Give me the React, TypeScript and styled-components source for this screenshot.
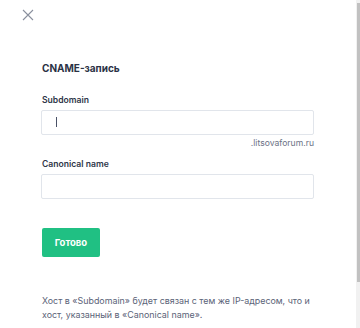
import React from "react";
import styled, { createGlobalStyle } from "styled-components";

const Global = createGlobalStyle`
  html, body { margin: 0; padding: 0; background: #ffffff; }
  body { font-family: "Inter", "Noto Sans", sans-serif; }
  * { box-sizing: border-box; }
`;

const Viewport = styled.div`
  width: 360px;
  height: 328px;
  overflow: hidden;
  display: flex;
  background: #ffffff;
`;

const Panel = styled.div`
  flex: 1;
  display: flex;
  flex-direction: column;
  padding: 9px 0 0 0;
`;

const ScrollTrack = styled.div`
  width: 4px;
  height: 100%;
  background: #f1f1f1;
  display: flex;
  flex-direction: column;
`;

const ScrollThumb = styled.div<{ $top: number; $size: number }>`
  margin: ${(p) => p.$top}px 0 0 1px;
  width: 2.5px;
  height: ${(p) => p.$size}px;
  background: #c1c1c1;
`;

const Header = styled.div`
  display: flex;
  padding-left: 22px;
  height: 21px;
`;

const CloseButton = styled.button`
  width: 12px;
  height: 12px;
  padding: 0;
  border: 0;
  background: transparent;
  display: flex;
  align-items: center;
  justify-content: center;
  cursor: pointer;
  color: #8a909e;
`;

const Body = styled.div`
  display: flex;
  flex-direction: column;
  padding-left: 41px;
  width: 314px;
`;

const Title = styled.h2`
  margin: 32px 0 0 1px;
  font-size: 10px;
  line-height: 12px;
  font-weight: 700;
  color: #2b3245;
`;

const Label = styled.label<{ $top: number }>`
  display: block;
  margin: ${(p) => p.$top}px 0 4px 1px;
  font-size: 8.6px;
  line-height: 12px;
  font-weight: 600;
  color: #2e3548;
`;

const Field = styled.div`
  position: relative;
  width: 273px;
  height: 25px;
`;

const Input = styled.input`
  width: 100%;
  height: 100%;
  border: 1px solid #e1e5eb;
  border-radius: 2px;
  background: #ffffff;
  outline: none;
  padding: 0 14px;
  font-family: inherit;
  font-size: 10px;
  color: #2b3245;
`;

const Caret = styled.span`
  position: absolute;
  left: 15px;
  top: 7px;
  width: 1px;
  height: 10px;
  background: #4a5166;
`;

const Hint = styled.div`
  width: 273px;
  margin-top: 2px;
  text-align: right;
  font-size: 8.6px;
  line-height: 12px;
  color: #6b7285;
`;

const Submit = styled.button`
  margin: 29px 0 0 1px;
  width: 58px;
  height: 29px;
  border: 0;
  border-radius: 2px;
  background: #20c083;
  color: #ffffff;
  font-family: inherit;
  font-size: 9.5px;
  font-weight: 700;
  cursor: pointer;
`;

const Note = styled.p`
  margin: 37px 0 0 1px;
  width: 273px;
  font-size: 8.9px;
  line-height: 14px;
  color: #5b6378;
`;

export default function App() {
  return (
    <>
      <Global />
      <Viewport>
        <Panel>
          <Header>
            <CloseButton aria-label="Закрыть">
              <svg width="12" height="12" viewBox="0 0 12 12" fill="none">
                <path d="M1 1L11 11M11 1L1 11" stroke="currentColor" strokeWidth="1.1" />
              </svg>
            </CloseButton>
          </Header>
          <Body>
            <Title>CNAME-запись</Title>
            <Label $top={20}>Subdomain</Label>
            <Field>
              <Input />
              <Caret />
            </Field>
            <Hint>.litsovaforum.ru</Hint>
            <Label $top={9}>Canonical name</Label>
            <Field>
              <Input />
            </Field>
            <Submit>Готово</Submit>
            <Note>
              Хост в «Subdomain» будет связан с тем же IP-адресом, что и хост, указанный в «Canonical name».
            </Note>
          </Body>
        </Panel>
        <ScrollTrack>
          <ScrollThumb $top={3} $size={279} />
        </ScrollTrack>
      </Viewport>
    </>
  );
}
